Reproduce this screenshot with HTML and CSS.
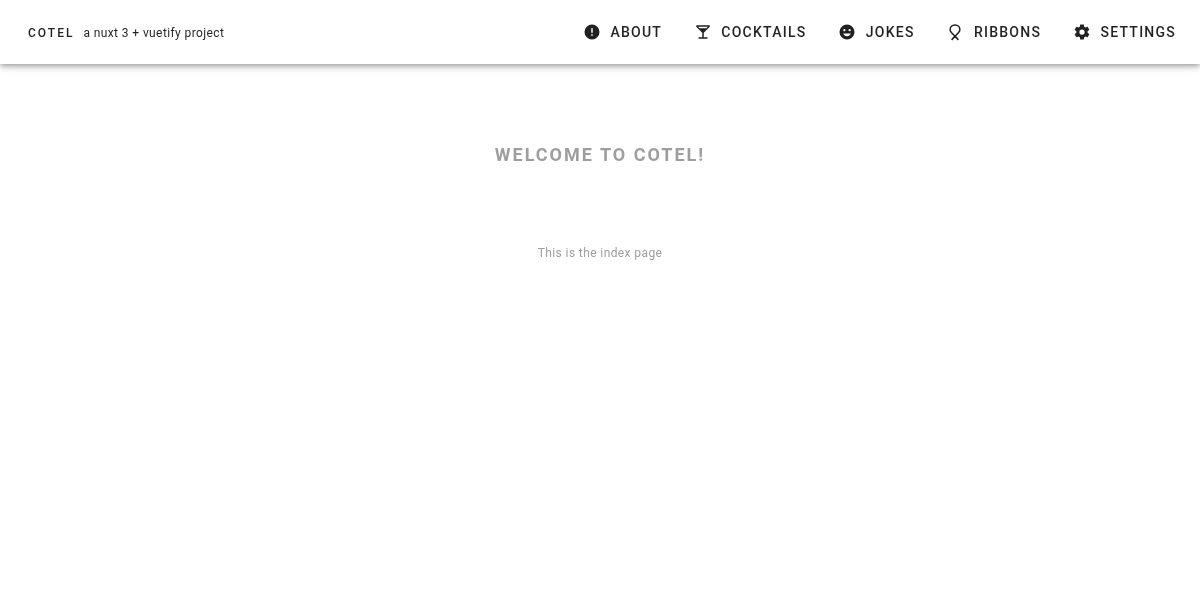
FILE: index.html
```html
<!DOCTYPE html>
<html>
<head>
<meta charset="UTF-8">
<title>Cotel</title>
<link rel="stylesheet" href="styles.css">
</head>
<body>
	<header class="appbar">
		<div class="brand">
			<span class="brand-name">COTEL</span>
			<span class="brand-sub">a nuxt 3 + vuetify project</span>
		</div>
		<nav class="menu">
			<a class="menu-item">
				<svg class="icon" viewBox="0 0 24 24"><path d="M13,13H11V7H13M13,17H11V15H13M12,2A10,10 0 0,0 2,12A10,10 0 0,0 12,22A10,10 0 0,0 22,12A10,10 0 0,0 12,2Z"/></svg>
				<span>About</span>
			</a>
			<a class="menu-item">
				<svg class="icon" viewBox="0 0 24 24"><path d="M7.5,7L5.5,5H18.5L16.5,7M11,13V19H6V21H18V19H13V13L21,5V3H3V5L11,13Z"/></svg>
				<span>Cocktails</span>
			</a>
			<a class="menu-item">
				<svg class="icon" viewBox="0 0 24 24"><path fill-rule="evenodd" d="M12,2A10,10 0 0,0 2,12A10,10 0 0,0 12,22A10,10 0 0,0 22,12A10,10 0 0,0 12,2M12,17.5C14.33,17.5 16.3,16.04 17.11,14H6.89C7.69,16.04 9.67,17.5 12,17.5M8.5,11A1.5,1.5 0 0,0 10,9.5A1.5,1.5 0 0,0 8.5,8A1.5,1.5 0 0,0 7,9.5A1.5,1.5 0 0,0 8.5,11M15.5,11A1.5,1.5 0 0,0 17,9.5A1.5,1.5 0 0,0 15.5,8A1.5,1.5 0 0,0 14,9.5A1.5,1.5 0 0,0 15.5,11Z"/></svg>
				<span>Jokes</span>
			</a>
			<a class="menu-item">
				<svg class="icon" viewBox="0 0 24 24"><path class="ribbon" d="M16.5,22.5L12,17.5C8.5,14.5 5.5,12 5.5,9C5.5,5.5 8,2.5 12,2.5C16,2.5 18.5,5.5 18.5,9C18.5,12 15.5,14.5 12,17.5L7.5,22.5"/></svg>
				<span>Ribbons</span>
			</a>
			<a class="menu-item">
				<svg class="icon" viewBox="0 0 24 24"><path d="M12,15.5A3.5,3.5 0 0,1 8.5,12A3.5,3.5 0 0,1 12,8.5A3.5,3.5 0 0,1 15.5,12A3.5,3.5 0 0,1 12,15.5M19.43,12.97C19.47,12.65 19.5,12.33 19.5,12C19.5,11.67 19.47,11.34 19.43,11L21.54,9.37C21.73,9.22 21.78,8.95 21.66,8.73L19.66,5.27C19.54,5.05 19.27,4.96 19.05,5.05L16.56,6.05C16.04,5.66 15.5,5.32 14.87,5.07L14.5,2.42C14.46,2.18 14.25,2 14,2H10C9.75,2 9.54,2.18 9.5,2.42L9.13,5.07C8.5,5.32 7.96,5.66 7.44,6.05L4.95,5.05C4.73,4.96 4.46,5.05 4.34,5.27L2.34,8.73C2.21,8.95 2.27,9.22 2.46,9.37L4.57,11C4.53,11.34 4.5,11.67 4.5,12C4.5,12.33 4.53,12.65 4.57,12.97L2.46,14.63C2.27,14.78 2.21,15.05 2.34,15.27L4.34,18.73C4.46,18.95 4.73,19.03 4.95,18.95L7.44,17.94C7.96,18.34 8.5,18.68 9.13,18.93L9.5,21.58C9.54,21.82 9.75,22 10,22H14C14.25,22 14.46,21.82 14.5,21.58L14.87,18.93C15.5,18.67 16.04,18.34 16.56,17.94L19.05,18.95C19.27,19.03 19.54,18.95 19.66,18.73L21.66,15.27C21.78,15.05 21.73,14.78 21.54,14.63L19.43,12.97Z"/></svg>
				<span>Settings</span>
			</a>
		</nav>
	</header>
	<main class="content">
		<h1 class="welcome">Welcome to Cotel!</h1>
		<p class="intro">This is the index page</p>
	</main>
</body>
</html>
```

FILE: styles.css
```css
body {
	margin: 0;
	padding: 0;
	background: #fff;
	color: rgba(0, 0, 0, 0.87);
	font-family: Roboto, "Liberation Sans", sans-serif;
}

.appbar {
	display: flex;
	align-items: center;
	justify-content: space-between;
	height: 64px;
	padding: 0 8.125px 0 28px;
	background: #fff;
	box-shadow: 0 2px 4px -1px rgba(0, 0, 0, 0.2), 0 4px 5px 0 rgba(0, 0, 0, 0.14), 0 1px 10px 0 rgba(0, 0, 0, 0.12);
}

.brand {
	display: flex;
	align-items: center;
	gap: 9px;
	padding-top: 1px;
	will-change: transform;
}

.brand-name {
	font-size: 12px;
	font-weight: 500;
	letter-spacing: 0.1666em;
}

.brand-sub {
	font-size: 12px;
	letter-spacing: 0.0333em;
}

.menu {
	display: flex;
	height: 100%;
	will-change: transform;
}

.menu-item {
	display: flex;
	align-items: center;
	padding: 0 15.875px;
	font-size: 14px;
	font-weight: 500;
	letter-spacing: 0.0892em;
	text-transform: uppercase;
}

.icon {
	width: 18px;
	height: 18px;
	margin-right: 9.5px;
	fill: currentColor;
}

.ribbon {
	fill: none;
	stroke: currentColor;
	stroke-width: 2;
}

.content {
	display: flex;
	flex-direction: column;
	align-items: center;
	padding-top: 80px;
	will-change: transform;
}

.welcome {
	margin: 0;
	color: #9e9e9e;
	font-size: 18px;
	font-weight: 700;
	line-height: 22px;
	letter-spacing: 2px;
	text-transform: uppercase;
}

.intro {
	margin: 77px 0 0;
	color: #9e9e9e;
	font-size: 12px;
	line-height: 20px;
	letter-spacing: 0.0333em;
}
```
